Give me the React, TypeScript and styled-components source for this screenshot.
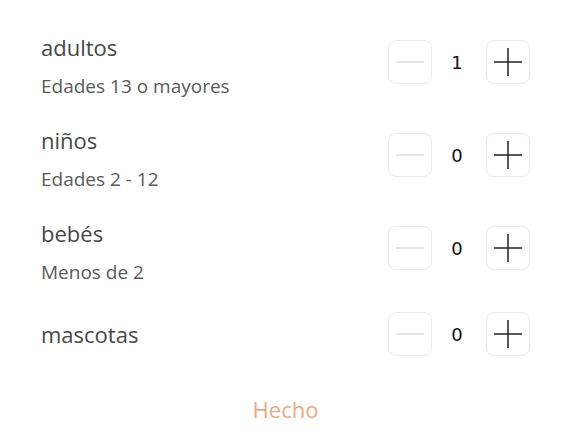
import React, { useState } from "react";
import styled, { createGlobalStyle } from "styled-components";

const GlobalStyle = createGlobalStyle`
  html, body {
    margin: 0;
    padding: 0;
    background: #ffffff;
  }
  body {
    font-family: "Open Sans", "Noto Sans", sans-serif;
  }
`;

type Guest = {
  key: string;
  title: string;
  subtitle?: string;
  value: number;
};

const initialGuests: Guest[] = [
  { key: "adults", title: "adultos", subtitle: "Edades 13 o mayores", value: 1 },
  { key: "children", title: "niños", subtitle: "Edades 2 - 12", value: 0 },
  { key: "infants", title: "bebés", subtitle: "Menos de 2", value: 0 },
  { key: "pets", title: "mascotas", value: 0 },
];

const MinusIcon = ({ color }: { color: string }) => (
  <svg width="30" height="30" viewBox="0 0 30 30">
    <line x1="1" y1="15" x2="29" y2="15" stroke={color} strokeWidth="1.5" />
  </svg>
);

const PlusIcon = ({ color }: { color: string }) => (
  <svg width="30" height="30" viewBox="0 0 30 30">
    <line x1="1" y1="15" x2="29" y2="15" stroke={color} strokeWidth="1.5" />
    <line x1="15" y1="1" x2="15" y2="29" stroke={color} strokeWidth="1.5" />
  </svg>
);

const App = () => {
  const [guests, setGuests] = useState(initialGuests);

  const change = (key: string, delta: number) => {
    setGuests((list) =>
      list.map((g) =>
        g.key === key ? { ...g, value: Math.max(0, g.value + delta) } : g
      )
    );
  };

  return (
    <>
      <GlobalStyle />
      <Panel>
        <List>
          {guests.map((g) => {
            const canDecrease = g.key === "adults" ? g.value > 1 : g.value > 0;
            return (
              <Row key={g.key} $single={!g.subtitle}>
                <Label>
                  <Title>{g.title}</Title>
                  {g.subtitle && <Subtitle>{g.subtitle}</Subtitle>}
                </Label>
                <Stepper>
                  <StepButton
                    disabled={!canDecrease}
                    onClick={() => change(g.key, -1)}
                    aria-label="menos"
                  >
                    <MinusIcon color={canDecrease ? "#222222" : "#dddddd"} />
                  </StepButton>
                  <Count>{g.value}</Count>
                  <StepButton onClick={() => change(g.key, 1)} aria-label="más">
                    <PlusIcon color="#222222" />
                  </StepButton>
                </Stepper>
              </Row>
            );
          })}
        </List>
        <Footer>
          <DoneButton>Hecho</DoneButton>
        </Footer>
      </Panel>
    </>
  );
};

export default App;

const Panel = styled.div`
  width: 568px;
  height: 444px;
  box-sizing: border-box;
  padding: 27px 38px 0 41px;
  display: flex;
  flex-direction: column;
`;

const List = styled.div`
  display: flex;
  flex-direction: column;
  gap: 23px;
`;

const Row = styled.div<{ $single?: boolean }>`
  display: flex;
  align-items: center;
  justify-content: space-between;
  min-height: 44px;
  margin-top: ${(p) => (p.$single ? "6px" : "0")};
`;

const Label = styled.div`
  display: flex;
  flex-direction: column;
  gap: 8px;
`;

const Title = styled.div`
  font-size: 22px;
  line-height: 40px;
  color: #484848;
`;

const Subtitle = styled.div`
  font-size: 19px;
  line-height: 22px;
  color: #5a5a5a;
`;

const Stepper = styled.div`
  display: flex;
  align-items: center;
`;

const StepButton = styled.button`
  width: 44px;
  height: 44px;
  box-sizing: border-box;
  padding: 0;
  border: 1px solid #ebebeb;
  border-radius: 8px;
  background: #ffffff;
  display: flex;
  align-items: center;
  justify-content: center;
  cursor: pointer;

  &:disabled {
    cursor: default;
  }
`;

const Count = styled.span`
  width: 50px;
  padding-right: 4px;
  text-align: center;
  font-family: "DejaVu Sans", sans-serif;
  font-size: 18px;
  color: #111111;
`;

const Footer = styled.div`
  display: flex;
  justify-content: center;
  margin-top: 37px;
`;

const DoneButton = styled.button`
  border: none;
  background: none;
  padding: 0;
  font-family: "Open Sans", sans-serif;
  font-size: 22px;
  line-height: 32px;
  color: #eda97e;
  cursor: pointer;
`;
